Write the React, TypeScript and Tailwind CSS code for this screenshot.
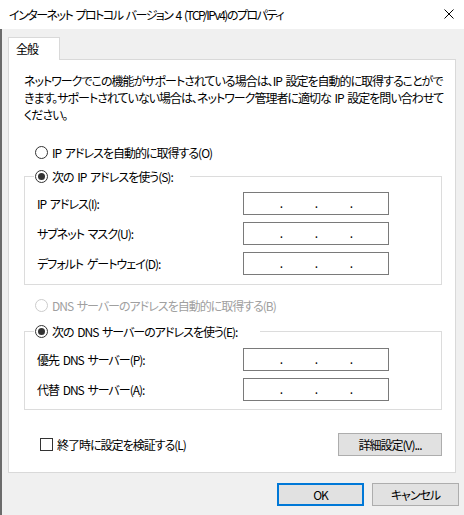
import type { ReactNode } from "react";

const font = "font-['Yu_Gothic_UI','Noto_Sans_CJK_JP',sans-serif] [font-feature-settings:'palt']";

type RadioProps = {
    checked?: boolean;
    disabled?: boolean;
};

const Radio = ({ checked, disabled }: RadioProps) => (
    <span
        className={`flex size-[13px] shrink-0 items-center justify-center rounded-full border bg-white ${
            disabled ? "border-[#cccccc]" : "border-[#333333]"
        }`}
    >
        {checked && <span className="size-[7px] rounded-full bg-[#333333]" />}
    </span>
);

const RadioRow = ({
    checked,
    disabled,
    children,
}: RadioProps & { children: ReactNode }) => (
    <div
        className={`flex h-[17px] items-center gap-[4px] ${
            disabled ? "text-[#a0a0a0]" : "text-black"
        }`}
    >
        <Radio checked={checked} disabled={disabled} />
        <span>{children}</span>
    </div>
);

const IpBox = () => (
    <div className="flex h-[23px] w-[146px] items-center border border-[#7a7a7a] bg-white pl-[20px] pb-[2px] tracking-normal">
        {[0, 1, 2].map((i) => (
            <span key={i} className="w-[35px] text-center">
                .
            </span>
        ))}
    </div>
);

const Field = ({ label }: { label: string }) => (
    <div className="flex items-center">
        <div className="w-[206px]">{label}</div>
        <IpBox />
    </div>
);

const Group = ({
    legend,
    legendWidth,
    fields,
    top,
    bottom,
}: {
    legend: string;
    legendWidth: string;
    fields: string[];
    top: string;
    bottom: string;
}) => (
    <fieldset className={`m-0 border border-[#dcdcdc] p-0 ${bottom}`}>
        <legend className={`ml-[9px] pl-[1px] ${legendWidth}`}>
            <RadioRow checked>{legend}</RadioRow>
        </legend>
        <div className={`flex flex-col gap-[7px] pl-[12px] ${top}`}>
            {fields.map((f) => (
                <Field key={f} label={f} />
            ))}
        </div>
    </fieldset>
);

export default function App() {
    return (
        <div
            className={`flex h-[515px] w-[464px] flex-col overflow-hidden bg-[#f0f0f0] text-[12px] leading-[17px] tracking-[-1px] [word-spacing:2px] text-black ${font}`}
        >
            <div className="flex h-[29px] shrink-0 items-center justify-between bg-white pl-[9px] pr-[10px]">
                <span className="tracking-[-1.5px]">
                    インターネット プロトコル バージョン 4 (TCP/IPv4)のプロパティ
                </span>
                <svg width="10" height="10" viewBox="0 0 10 10" className="mb-[1px]">
                    <path d="M0.5 0.5L9.5 9.5M9.5 0.5L0.5 9.5" stroke="#000" strokeWidth="1" />
                </svg>
            </div>

            <div className="flex grow flex-col border-l-[2px] border-[#6b6b6b] pl-[6px] pt-[8px]">
                <div className="relative z-10 -mb-px flex h-[23px] w-[52px] items-center border border-b-0 border-[#d9d9d9] bg-white pl-[7px] pb-[1px]">
                    全般
                </div>

                <div className="flex h-[414px] w-[448px] flex-col border border-[#d9d9d9] bg-white pl-[15px] pt-[12px]">
                    <div className="whitespace-nowrap">
                        <div>ネットワークでこの機能がサポートされている場合は、IP 設定を自動的に取得することがで</div>
                        <div>きます。サポートされていない場合は、ネットワーク管理者に適切な IP 設定を問い合わせて</div>
                        <div>ください。</div>
                    </div>

                    <div className="mt-[21px] pl-[11px]">
                        <RadioRow>IP アドレスを自動的に取得する(O)</RadioRow>
                    </div>

                    <div className="mt-[7px] w-[418px]">
                        <Group
                            legend="次の IP アドレスを使う(S):"
                            legendWidth="w-[156px]"
                            fields={["IP アドレス(I):", "サブネット マスク(U):", "デフォルト ゲートウェイ(D):"]}
                            top="pt-[7px]"
                            bottom="pb-[9px]"
                        />
                    </div>

                    <div className="mt-[12px] pl-[11px]">
                        <RadioRow disabled>DNS サーバーのアドレスを自動的に取得する(B)</RadioRow>
                    </div>

                    <div className="mt-[9px] w-[418px]">
                        <Group
                            legend="次の DNS サーバーのアドレスを使う(E):"
                            legendWidth="w-[226px]"
                            fields={["優先 DNS サーバー(P):", "代替 DNS サーバー(A):"]}
                            top="pt-[8px]"
                            bottom="pb-[8px]"
                        />
                    </div>

                    <div className="mt-[23px] flex w-[418px] items-center justify-between pl-[16px]">
                        <div className="flex items-center gap-[4px]">
                            <span className="size-[13px] border border-[#333333] bg-white" />
                            <span>終了時に設定を検証する(L)</span>
                        </div>
                        <button className="flex h-[23px] w-[104px] items-center justify-center border border-[#adadad] bg-[#e1e1e1]">
                            詳細設定(V)...
                        </button>
                    </div>
                </div>

                <div className="mt-[10px] flex justify-end gap-[8px] pr-[5px]">
                    <button className="flex h-[23px] w-[87px] items-center justify-center border-2 border-[#0078d7] bg-[#e1e1e1]">
                        OK
                    </button>
                    <button className="flex h-[23px] w-[87px] items-center justify-center border border-[#adadad] bg-[#e1e1e1]">
                        キャンセル
                    </button>
                </div>
            </div>
        </div>
    );
}
